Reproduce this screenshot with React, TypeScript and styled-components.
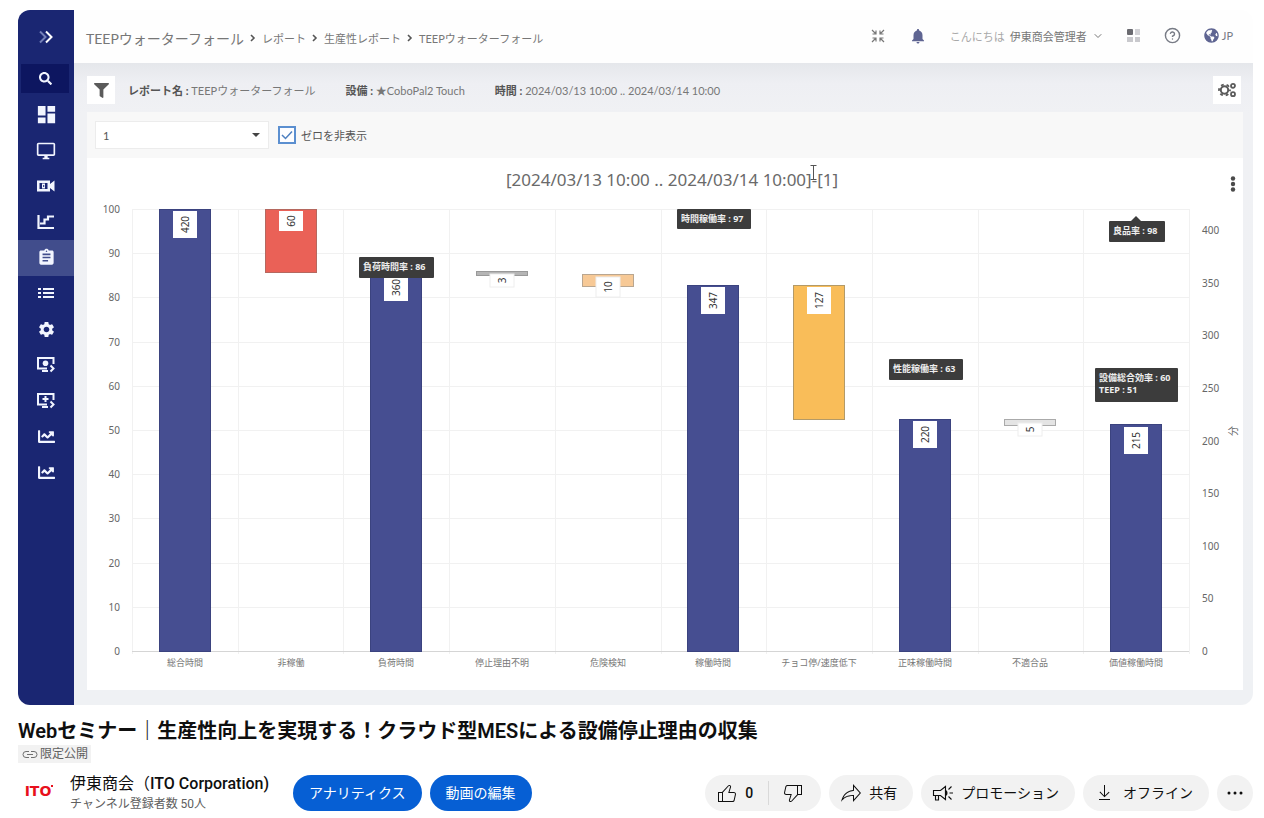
import React from 'react';
import styled, { createGlobalStyle } from 'styled-components';
import {
  MdDashboard,
  MdOutlineDesktopWindows,
  MdAssignment,
  MdSettings,
  MdNotifications,
} from 'react-icons/md';
import { FaSearch, FaChartLine, FaFilter, FaGlobeAmericas } from 'react-icons/fa';
import { FiHelpCircle, FiChevronDown } from 'react-icons/fi';

const jp = `"Noto Sans CJK JP", sans-serif`;

const GlobalStyle = createGlobalStyle`
  *, *::before, *::after { box-sizing: border-box; }
  body {
    margin: 0;
    background: #fff;
    color: #0f0f0f;
    font-family: Roboto, ${jp};
  }
  button, select, input { font: inherit; color: inherit; }
  button { border: 0; padding: 0; background: none; cursor: pointer; }
  a { color: inherit; text-decoration: none; }
  svg { display: block; flex: none; }
`;

const Page = styled.main`
  padding: 10px 11px 0 18px;
`;

/* ---------- Player frame ---------- */

const Player = styled.section`
  display: flex;
  border-radius: 12px;
  overflow: hidden;
  font-family: Lato, ${jp};
  font-size: 11px;
  color: #6b6b6b;
`;

const Sidebar = styled.nav`
  flex: none;
  width: 56px;
  background: #1a2672;
  color: #f2f5ff;
`;

const ExpandButton = styled.button`
  display: flex;
  align-items: center;
  justify-content: center;
  width: 100%;
  height: 54px;
`;

const SearchButton = styled.button`
  display: flex;
  align-items: center;
  justify-content: center;
  width: 48px;
  height: 29px;
  margin: 0 3px 4px;
  background: #0d1660;
`;

const SideList = styled.div`
  display: grid;
  grid-auto-rows: 1fr;
  height: 393px;
`;

const SideLink = styled.a<{ $active?: boolean }>`
  display: flex;
  align-items: center;
  justify-content: center;
  background: ${(p) => (p.$active ? '#414d8c' : 'transparent')};
`;

const Dashboard = styled.div`
  flex: 1;
  min-width: 0;
  display: flex;
  flex-direction: column;
`;

const TopBar = styled.header`
  display: flex;
  align-items: center;
  justify-content: space-between;
  height: 53px;
  padding: 0 20px 0 12px;
  background: #fefefe;
`;

const Crumbs = styled.nav`
  display: flex;
  align-items: center;
  gap: 6px;
  padding-top: 2px;
  color: #777;
`;

const CrumbTitle = styled.span`
  font-size: 14px;
`;

const TopTools = styled.div`
  display: flex;
  align-items: center;
  gap: 23px;
  padding-bottom: 2px;
`;

const IconButton = styled.button`
  display: flex;
  align-items: center;
  gap: 3px;
  color: #777b85;
`;

const UserButton = styled.button`
  display: flex;
  align-items: center;
  gap: 5px;
  color: #777;
`;

const Greeting = styled.span`
  color: #a9a9a9;
`;

const Workspace = styled.div`
  padding: 0 10px 15px 13px;
  background: linear-gradient(#e5e7eb, #eeeff3 20px, #f0f1f4 50px, #eff1f4);
`;

const FilterBar = styled.div`
  display: flex;
  align-items: center;
  gap: 30px;
  height: 49px;
  padding: 5px 2px 0 0;
`;

const SquareButton = styled.button`
  display: flex;
  align-items: center;
  justify-content: center;
  width: 28px;
  height: 28px;
  background: #fff;
  color: #5b5b5b;
`;

const FilterLead = styled.div`
  display: flex;
  align-items: center;
  gap: 13px;
`;

const SettingsSlot = styled.div`
  margin-left: auto;
`;

const FilterText = styled.span`
  white-space: nowrap;
  color: #777;

  b { color: #555; }
`;

const OptionBar = styled.div`
  display: flex;
  align-items: center;
  gap: 9px;
  height: 46px;
  padding: 0 8px;
  background: #f8f8f8;
  color: #555;
`;

const SelectBox = styled.div`
  position: relative;
  width: 174px;

  svg {
    position: absolute;
    right: 9px;
    top: 12px;
    pointer-events: none;
  }
`;

const Select = styled.select`
  appearance: none;
  display: block;
  width: 100%;
  height: 28px;
  padding: 0 7px;
  border: 1px solid #ececec;
  border-radius: 0;
  background: #fff;
`;

const CheckLabel = styled.label`
  display: grid;
  grid-template-columns: 18px auto;
  align-items: center;
  column-gap: 5px;
  color: #555;

  svg {
    grid-area: 1 / 1;
    justify-self: center;
    pointer-events: none;
  }
`;

const Check = styled.input`
  appearance: none;
  grid-area: 1 / 1;
  width: 18px;
  height: 18px;
  margin: 0;
  border: 2px solid #5b8fd0;
  background: #fdfdff;
`;

const ChartPanel = styled.div`
  position: relative;
  background: #fff;
`;

const ChartSvg = styled.svg`
  width: 100%;
  height: auto;
  font-family: "Noto Sans", ${jp};
`;

const MenuButton = styled.button`
  position: absolute;
  top: 16px;
  right: 3px;
  padding: 2px 4px;
`;

/* ---------- Video details ---------- */

const VideoTitle = styled.h1`
  margin: 12px 0 0;
  font-size: 20px;
  line-height: 28px;
  font-weight: 600;
`;

const Badge = styled.span`
  display: inline-flex;
  align-items: center;
  gap: 2px;
  height: 18px;
  padding: 0 3px 0 4px;
  background: #f2f2f2;
  color: #606060;
  font-size: 12px;
  line-height: 18px;
  vertical-align: top;
`;

const BadgeRow = styled.div`
  height: 18px;
`;

const ActionsRow = styled.div`
  display: flex;
  align-items: center;
  justify-content: space-between;
  margin-top: 10px;
`;

const Owner = styled.div`
  display: flex;
  align-items: center;
  gap: 8px;
`;

const Avatar = styled.a`
  position: relative;
  display: flex;
  align-items: center;
  justify-content: center;
  width: 40px;
  height: 40px;
  padding-bottom: 4px;
  border-radius: 50%;
  color: #e8101c;
  font-family: "DejaVu Sans", sans-serif;
  font-size: 14px;
  font-weight: 700;
`;

const AvatarDot = styled.span`
  position: absolute;
  top: 12px;
  right: 5px;
  width: 2px;
  height: 2px;
  background: #e8101c;
`;

const ChannelInfo = styled.div`
  margin: 0 16px 0 4px;
  white-space: nowrap;
`;

const ChannelName = styled.a`
  display: block;
  font-size: 16px;
  line-height: 22px;
`;

const Medium = styled.span`
  font-weight: 500;
`;

const Subscribers = styled.span`
  display: block;
  color: #606060;
  font-size: 12px;
  line-height: 18px;
`;

const Pill = styled.button<{ $tone?: 'blue' | 'grey' }>`
  display: flex;
  align-items: center;
  gap: 6px;
  height: 36px;
  padding: ${(p) => (p.$tone === 'blue' ? '0 16px' : '0 16px 0 10px')};
  border-radius: 18px;
  background: ${(p) => (p.$tone === 'blue' ? '#065fd4' : '#f2f2f2')};
  color: ${(p) => (p.$tone === 'blue' ? '#fff' : '#0f0f0f')};
  font-size: 14px;
  white-space: nowrap;
`;

const PillText = styled.span`
  padding-bottom: 3px;
`;

const Actions = styled.div`
  display: flex;
  gap: 8px;
`;

const Segmented = styled.div`
  display: flex;
  align-items: center;
  border-radius: 18px;
  background: #f2f2f2;
`;

const Segment = styled(Pill)<{ $last?: boolean }>`
  background: none;
  font-weight: 500;
  padding: ${(p) => (p.$last ? '0 16px 0 12px' : '0 15px 0 10px')};
`;

const Divider = styled.span`
  width: 1px;
  height: 24px;
  background: #d9d9d9;
`;

const RoundButton = styled(Pill)`
  justify-content: center;
  width: 36px;
  padding: 0;
`;

/* ---------- Icons ---------- */

const DoubleChevron = () => (
  <svg width="16" height="14" viewBox="0 0 16 14" fill="none" strokeWidth="2">
    <path d="M2 1.500l5.500 5.500L2 12.500" stroke="#7480b8" />
    <path d="M8 1.500l5.500 5.500L8 12.500" stroke="#fff" />
  </svg>
);

const CameraIcon = () => (
  <svg width="18" height="12" viewBox="0 0 18 12">
    <path d="M0 .500h13v3.500l4.500-3.500v11l-4.500-3.500v3.500H0z" fill="currentColor" />
    <path d="M2.500 3h8v6h-8z" fill="#1a2672" />
    <path d="M5 3.500h3v5H5z" fill="currentColor" />
    <path d="M6.200 5h1v2h-1z" fill="#1a2672" />
  </svg>
);

const StepChartIcon = () => (
  <svg width="18" height="16" viewBox="0 0 18 16" fill="none" stroke="currentColor" strokeWidth="2.200">
    <path d="M1.500 1v13H17" />
    <path d="M3 9.500h4.500V5.500h3.500V2.500h6" />
  </svg>
);

const ListIcon = () => (
  <svg width="18" height="12" viewBox="0 0 18 12" stroke="currentColor" strokeWidth="2">
    <path d="M1 2h3M1 6h3M1 10h3M6 2h11M6 6h11M6 10h11" />
  </svg>
);

const ScreenIcon = ({ plus }: { plus?: boolean }) => (
  <svg width="20" height="17" viewBox="0 0 20 17" fill="none" stroke="currentColor" strokeWidth="2">
    <path d="M11 12.500H2V2h15.500v6" />
    <path d="M6 15h6" />
    {plus ? <path d="M9.500 4v6M6.500 7h6" /> : <circle cx="9.500" cy="7.200" r="2.800" fill="currentColor" stroke="none" />}
    <path d="M14.500 9.500l3 3-3 3" />
  </svg>
);

const ShrinkIcon = () => (
  <svg width="16" height="16" viewBox="0 0 16 16" fill="none" stroke="#777" strokeWidth="1.200">
    <path d="M2 2l4 4M2.500 6H6V2.500M14 2l-4 4M13.500 6H10V2.500M2 14l4-4M2.500 10H6v3.500M14 14l-4-4M13.500 10H10v3.500" />
  </svg>
);

const AppsIcon = () => (
  <svg width="14" height="14" viewBox="0 0 14 14">
    <rect width="6" height="6" rx="1" fill="#6a6a70" />
    <rect x="8" width="5" height="6" fill="#d2d2d6" />
    <rect y="8" width="6" height="5" fill="#c9c9cd" />
    <rect x="8" y="8" width="5" height="5" fill="#c9c9cd" />
  </svg>
);

const GearsIcon = () => (
  <svg width="19" height="16" viewBox="0 0 19 16" fill="none" stroke="#5b5b5b">
    <circle cx="6.500" cy="8" r="3.700" strokeWidth="2" />
    <circle cx="6.500" cy="8" r="5.500" strokeWidth="1.800" strokeDasharray="2.800 2.960" strokeDashoffset="1.400" />
    <circle cx="15" cy="3.800" r="2" strokeWidth="1.800" />
    <circle cx="15" cy="12.200" r="2" strokeWidth="1.800" />
  </svg>
);

const DotsIcon = () => (
  <svg width="6" height="16" viewBox="0 0 6 16" fill="#4a4a4a">
    <circle cx="3" cy="2.500" r="2.200" />
    <circle cx="3" cy="8" r="2.200" />
    <circle cx="3" cy="13.500" r="2.200" />
  </svg>
);

const CrumbArrow = () => (
  <svg width="6" height="8" viewBox="0 0 6 8" fill="none" stroke="#555" strokeWidth="1.600">
    <path d="M1 1l3 3-3 3" />
  </svg>
);

const LinkIcon = () => (
  <svg width="16" height="16" viewBox="0 0 16 16" fill="none" stroke="#707070">
    <path d="M7 5.500H4a3 3 0 0 0 0 6H7M9 5.500h3a3 3 0 0 1 0 6H9M5 8.500h6" />
  </svg>
);

const YtIcon = ({ d }: { d: string }) => (
  <svg width="24" height="24" viewBox="0 0 24 24" fill="currentColor">
    <path d={d} />
  </svg>
);

const PromoIcon = () => (
  <svg width="24" height="24" viewBox="0 0 24 24" fill="none" stroke="currentColor" strokeWidth="1.100">
    <path d="M2.500 9.500h7l5-4v13l-5-4h-7zM4.500 14.500v4.500h3v-4.500" />
    <path d="M14.500 9.500c2 .500 2 4.500 0 5z" fill="currentColor" />
    <path d="M18.500 12H22M17.500 8.500l3-3M17.500 15.500l3 3" />
  </svg>
);

const likePath =
  'M18.770 11h-4.230l1.520-4.940C16.380 5.030 15.540 4 14.380 4c-.580 0-1.140.240-1.520.650L7 11H3v10h14.430c1.060 0 1.980-.670 2.190-1.610l1.340-6C21.230 12.150 20.180 11 18.770 11zM7 20H4v-8h3v8zm12.980-6.830-1.340 6c-.100.480-.610.830-1.210.830H8v-8.610l5.600-6.060c.190-.210.480-.330.780-.330.260 0 .500.110.630.300.070.100.150.260.090.470l-1.520 4.940-.400 1.290h5.580c.410 0 .800.170 1.030.460.130.150.260.400.190.710z';
const dislikePath =
  'M17 4H6.570C5.500 4 4.590 4.670 4.380 5.610l-1.340 6C2.770 12.850 3.820 14 5.230 14h4.230l-1.520 4.940C7.620 19.970 8.460 21 9.620 21c.580 0 1.140-.240 1.520-.650L17 14h4V4h-4zm-6.600 15.670c-.190.210-.480.330-.780.330-.260 0-.500-.110-.630-.300-.070-.100-.150-.260-.090-.470l1.520-4.940.400-1.290H5.230c-.410 0-.800-.170-1.030-.460-.120-.150-.250-.400-.180-.720l1.340-6C5.460 5.350 5.970 5 6.570 5H16v8.610l-5.600 6.060zM20 13h-3V5h3v8z';
const sharePath =
  'M15 5.630 20.660 12 15 18.370V14h-1c-3.960 0-7.140 1-9.750 3.090 1.840-4.070 5.110-6.400 9.890-7.100l.860-.130V5.630M14 3v6C6.220 10.130 3.110 15.330 2 21c2.780-3.970 6.440-6 12-6v6l8-9-8-9z';
const downloadPath = 'M17 18v1H6v-1h11zm-.500-6.600-.700-.700-3.800 3.700V4h-1v10.400l-3.800-3.800-.700.700 5 5 5-4.900z';
const morePath =
  'M7.500 12a1.500 1.500 0 1 1-3 0 1.500 1.500 0 0 1 3 0zM13.500 12a1.500 1.500 0 1 1-3 0 1.500 1.500 0 0 1 3 0zM19.500 12a1.500 1.500 0 1 1-3 0 1.500 1.500 0 0 1 3 0z';

/* ---------- Chart ---------- */

interface Bar {
  name: string;
  value: number;
  top: number;
  bottom: number;
  fill: string;
  line: string;
  tag: number;
}

const navy = '#464e91';
const PLOT = { left: 132, right: 1189, top: 209, bottom: 651 };
const STEP = (PLOT.right - PLOT.left) / 10;

const bars: Bar[] = [
  { name: '総合時間', value: 420, top: 209, bottom: 651, fill: navy, line: '#3b437f', tag: 211 },
  { name: '非稼働', value: 60, top: 209, bottom: 272, fill: '#ea6157', line: '#b5685f', tag: 211 },
  { name: '負荷時間', value: 360, top: 272, bottom: 651, fill: navy, line: '#3b437f', tag: 274 },
  { name: '停止理由不明', value: 3, top: 271, bottom: 275, fill: '#b5b5b5', line: '#999', tag: 274 },
  { name: '危険検知', value: 10, top: 274, bottom: 286, fill: '#f7c996', line: '#b9a690', tag: 277 },
  { name: '稼働時間', value: 347, top: 285, bottom: 651, fill: navy, line: '#3b437f', tag: 287 },
  { name: 'チョコ停/速度低下', value: 127, top: 285, bottom: 419, fill: '#f9bd59', line: '#b39a68', tag: 287 },
  { name: '正味稼働時間', value: 220, top: 419, bottom: 651, fill: navy, line: '#3b437f', tag: 421 },
  { name: '不適合品', value: 5, top: 419, bottom: 425, fill: '#e4e4e4', line: '#aaa', tag: 423 },
  { name: '価値稼働時間', value: 215, top: 424, bottom: 651, fill: navy, line: '#3b437f', tag: 427 },
];

const tips = [
  { x: 359, y: 257, w: 75, h: 21, lines: ['負荷時間率 : 86'] },
  { x: 677, y: 209, w: 74, h: 20, lines: ['時間稼働率 : 97'] },
  { x: 1109, y: 221, w: 56, h: 21, lines: ['良品率 : 98'], arrow: true },
  { x: 889, y: 359, w: 74, h: 21, lines: ['性能稼働率 : 63'] },
  { x: 1095, y: 368, w: 83, h: 34, lines: ['設備総合効率 : 60', 'TEEP : 51'] },
];

const tagHeight = (v: number) => (v >= 100 ? 27 : v >= 10 ? 20 : 13);

const Chart = () => (
  <ChartSvg viewBox="87 158 1156 532" role="img" aria-label="TEEPウォーターフォール">
    <text x="672" y="186" textAnchor="middle" fontSize="17" fill="#6a6a6a">
      [2024/03/13 10:00 .. 2024/03/14 10:00]-[1]
    </text>
    <g stroke="#f1f1f1">
      {Array.from({ length: 11 }, (_, i) => (
        <path key={`v${i}`} d={`M${Math.round(PLOT.left + i * STEP) + 0.5} ${PLOT.top}V${PLOT.bottom + 3}`} />
      ))}
      {Array.from({ length: 10 }, (_, i) => (
        <path key={`h${i}`} d={`M${PLOT.left} ${Math.round(PLOT.top + i * 44.2) + 0.5}H${PLOT.right}`} />
      ))}
      <path d={`M${PLOT.left} ${PLOT.bottom + 0.5}H${PLOT.right}`} stroke="#d5d5d5" />
    </g>
    <g fontSize="10" fill="#666">
      {Array.from({ length: 11 }, (_, i) => (
        <text key={i} x="120" y={PLOT.bottom - i * 44.2 + 4} textAnchor="end">
          {i * 10}
        </text>
      ))}
      {Array.from({ length: 9 }, (_, i) => (
        <text key={i} x="1202" y={PLOT.bottom - i * 52.6 + 4}>
          {i * 50}
        </text>
      ))}
      <text transform="translate(1237 431) rotate(-90)" textAnchor="middle">
        分
      </text>
    </g>
    {bars.map((b, i) => {
      const cx = Math.round(PLOT.left + (i + 0.5) * STEP);
      const h = tagHeight(b.value);
      return (
        <g key={b.name}>
          <rect
            x={cx - 25.5}
            y={b.top + 0.5}
            width="51"
            height={b.bottom - b.top}
            fill={b.fill}
            stroke={b.line}
          />
          <rect x={cx - 12} y={b.tag} width="24" height={h} fill="#fff" stroke={b.value < 20 ? '#eee' : 'none'} />
          <text
            transform={`translate(${cx + 4} ${b.tag + h / 2}) rotate(-90)`}
            textAnchor="middle"
            fontSize="10"
            fill="#333"
          >
            {b.value}
          </text>
          <text x={cx} y="666" textAnchor="middle" fontSize="9" fill="#777">
            {b.name}
          </text>
        </g>
      );
    })}
    {tips.map((t) => (
      <g key={t.lines[0]}>
        <rect x={t.x} y={t.y} width={t.w} height={t.h} rx="1" fill="#3c3c3c" />
        {t.arrow && <path d={`M${t.x + 22} ${t.y}l5-5 5 5z`} fill="#3c3c3c" />}
        {t.lines.map((line, i) => (
          <text key={line} x={t.x + 4} y={t.y + 13 + i * 12} fontSize="9" fontWeight="700" fill="#eee">
            {line}
          </text>
        ))}
      </g>
    ))}
    <path d="M810.500 165.500h6M813.500 165.500v14M810.500 179.500h6" fill="none" stroke="#555" />
  </ChartSvg>
);

const sideItems: { label: string; icon: React.ReactNode; active?: boolean }[] = [
  { label: 'ダッシュボード', icon: <MdDashboard size={23} /> },
  { label: 'モニター', icon: <MdOutlineDesktopWindows size={20} /> },
  { label: 'カメラ', icon: <CameraIcon /> },
  { label: '推移', icon: <StepChartIcon /> },
  { label: 'レポート', icon: <MdAssignment size={19} />, active: true },
  { label: '一覧', icon: <ListIcon /> },
  { label: '設定', icon: <MdSettings size={19} /> },
  { label: '画面', icon: <ScreenIcon /> },
  { label: '画面の追加', icon: <ScreenIcon plus /> },
  { label: 'グラフ1', icon: <FaChartLine size={17} /> },
  { label: 'グラフ2', icon: <FaChartLine size={17} /> },
];

export default function App() {
  return (
    <>
      <GlobalStyle />
      <Page>
        <Player>
          <Sidebar>
            <ExpandButton aria-label="メニューを開く">
              <DoubleChevron />
            </ExpandButton>
            <SearchButton aria-label="検索">
              <FaSearch size={13} />
            </SearchButton>
            <SideList>
              {sideItems.map((s) => (
                <SideLink key={s.label} href="#" aria-label={s.label} $active={s.active}>
                  {s.icon}
                </SideLink>
              ))}
            </SideList>
          </Sidebar>
          <Dashboard>
            <TopBar>
              <Crumbs>
                <CrumbTitle>TEEPウォーターフォール</CrumbTitle>
                <CrumbArrow />
                <a href="#">レポート</a>
                <CrumbArrow />
                <a href="#">生産性レポート</a>
                <CrumbArrow />
                <a href="#">TEEPウォーターフォール</a>
              </Crumbs>
              <TopTools>
                <IconButton aria-label="縮小">
                  <ShrinkIcon />
                </IconButton>
                <IconButton aria-label="通知">
                  <MdNotifications size={18} color="#5f6592" />
                </IconButton>
                <UserButton>
                  <Greeting>こんにちは</Greeting>
                  伊東商会管理者
                  <FiChevronDown size={12} />
                </UserButton>
                <IconButton aria-label="アプリ">
                  <AppsIcon />
                </IconButton>
                <IconButton aria-label="ヘルプ">
                  <FiHelpCircle size={17} />
                </IconButton>
                <IconButton>
                  <FaGlobeAmericas size={15} color="#5f6592" />
                  JP
                </IconButton>
              </TopTools>
            </TopBar>
            <Workspace>
              <FilterBar>
                <FilterLead>
                  <SquareButton aria-label="フィルター">
                    <FaFilter size={15} />
                  </SquareButton>
                  <FilterText>
                    <b>レポート名 :</b> TEEPウォーターフォール
                  </FilterText>
                </FilterLead>
                <FilterText>
                  <b>設備 :</b> ★CoboPal2 Touch
                </FilterText>
                <FilterText>
                  <b>時間 :</b> 2024/03/13 10:00 .. 2024/03/14 10:00
                </FilterText>
                <SettingsSlot>
                  <SquareButton aria-label="表示設定">
                    <GearsIcon />
                  </SquareButton>
                </SettingsSlot>
              </FilterBar>
              <OptionBar>
                <SelectBox>
                  <Select aria-label="番号" defaultValue="1">
                    <option>1</option>
                  </Select>
                  <svg width="8" height="4" viewBox="0 0 8 4">
                    <path d="M0 0h8L4 4z" fill="#444" />
                  </svg>
                </SelectBox>
                <CheckLabel>
                  <Check type="checkbox" defaultChecked />
                  <svg width="12" height="10" viewBox="0 0 12 10" fill="none" stroke="#4d7fc0" strokeWidth="1.500">
                    <path d="M1 5l3.500 3.500L11 1.500" />
                  </svg>
                  ゼロを非表示
                </CheckLabel>
              </OptionBar>
              <ChartPanel>
                <Chart />
                <MenuButton aria-label="グラフメニュー">
                  <DotsIcon />
                </MenuButton>
              </ChartPanel>
            </Workspace>
          </Dashboard>
        </Player>

        <VideoTitle>Webセミナー｜生産性向上を実現する！クラウド型MESによる設備停止理由の収集</VideoTitle>
        <BadgeRow>
          <Badge>
            <LinkIcon />
            限定公開
          </Badge>
        </BadgeRow>
        <ActionsRow>
          <Owner>
            <Avatar href="#">
              ITO
              <AvatarDot />
            </Avatar>
            <ChannelInfo>
              <ChannelName href="#">
                伊東商会（<Medium>ITO Corporation)</Medium>
              </ChannelName>
              <Subscribers>チャンネル登録者数 50人</Subscribers>
            </ChannelInfo>
            <Pill $tone="blue">
              <PillText>アナリティクス</PillText>
            </Pill>
            <Pill $tone="blue">
              <PillText>動画の編集</PillText>
            </Pill>
          </Owner>
          <Actions>
            <Segmented>
              <Segment aria-label="高く評価 0">
                <YtIcon d={likePath} />0
              </Segment>
              <Divider />
              <Segment $last aria-label="低く評価">
                <YtIcon d={dislikePath} />
              </Segment>
            </Segmented>
            <Pill>
              <YtIcon d={sharePath} />
              <PillText>共有</PillText>
            </Pill>
            <Pill>
              <PromoIcon />
              <PillText>プロモーション</PillText>
            </Pill>
            <Pill>
              <YtIcon d={downloadPath} />
              <PillText>オフライン</PillText>
            </Pill>
            <RoundButton aria-label="その他の操作">
              <YtIcon d={morePath} />
            </RoundButton>
          </Actions>
        </ActionsRow>
      </Page>
    </>
  );
}
